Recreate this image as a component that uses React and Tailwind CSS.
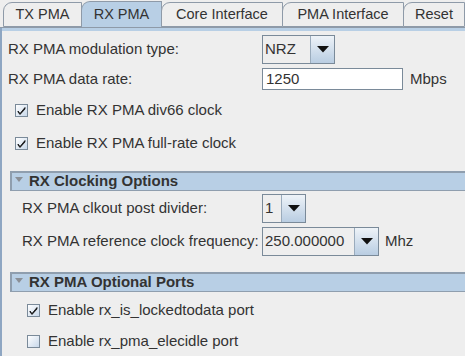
import React from "react";

const font = { fontFamily: '"Liberation Sans", Arial, sans-serif' };

const Tab = ({ label, active, className }) => (
  <div
    className={`h-[25px] flex items-center justify-center border-t border-l border-r rounded-tl-[9px] border-[#8e9aa8] text-[14.5px] text-[#333333] ${
      active ? "bg-[#b8cfe5] h-[26px] border-b-0" : "bg-[#eeeeee] border-b"
    } ${className}`}
  >
    {label}
  </div>
);

const Arrow = () => (
  <svg width="12" height="7" viewBox="0 0 12 7">
    <path d="M0 0 L12 0 L6 6.5 Z" fill="#111111" />
  </svg>
);

const Combo = ({ value, fieldW, className = "" }) => (
  <div className={`flex h-[29px] border border-[#7a8a99] ${className}`}>
    <div
      className="flex items-center pl-[2px] text-[15px] text-[#333333] bg-[#eeeeee] border-r border-[#9aabbc]"
      style={{ width: fieldW }}
    >
      {value}
    </div>
    <div className="w-[23px] flex items-center justify-center bg-gradient-to-b from-[#eef3f8] to-[#b9cde2]">
      <Arrow />
    </div>
  </div>
);

const Check = ({ checked }) => (
  <div className="w-[13px] h-[13px] border border-[#7a8a99] bg-gradient-to-br from-[#ffffff] to-[#c8d8ea] flex items-center justify-center">
    {checked && (
      <svg width="9" height="9" viewBox="0 0 9 9">
        <path d="M1 5 L3 7.5 L8 1.5 L8 3 L3 8.5 L1 6 Z" fill="#111111" stroke="#111111" strokeWidth="0.8" />
      </svg>
    )}
  </div>
);

const CheckRow = ({ label, checked, indent, className }) => (
  <div className={`h-[20px] flex items-center gap-[8px] ${indent} ${className}`}>
    <Check checked={checked} />
    <span className="text-[15px] text-[#333333]">{label}</span>
  </div>
);

const Section = ({ title, className }) => (
  <div
    className={`ml-[8px] h-[20px] flex items-center bg-[#b8cfe5] border-t-2 border-l-2 border-b border-[#8f9eae] ${className}`}
  >
    <svg width="8" height="5" viewBox="0 0 8 5" className="ml-[3px] self-start mt-[4px]">
      <path d="M0 0 L8 0 L4 5 Z" fill="#8a8f96" />
    </svg>
    <span className="ml-[6px] text-[15px] font-bold text-[#333333]">{title}</span>
  </div>
);

export default function App() {
  return (
    <div style={font} className="w-[465px] h-[356px] bg-[#eeeeee] overflow-hidden flex flex-col">
      <div className="h-[28px] flex items-end pl-[3px] border-b border-[#8e9aa8]">
        <Tab label="TX PMA" className="w-[79px]" />
        <Tab label="RX PMA" active className="w-[81px] -ml-[1px]" />
        <Tab label="Core Interface" className="w-[122px] -ml-[1px]" />
        <Tab label="PMA Interface" className="w-[122px] -ml-[1px]" />
        <Tab label="Reset" className="w-[62px] -ml-[1px]" />
      </div>
      <div className="flex-1 flex flex-col border-l-2 border-[#8ea6c2]">
        <div className="h-[3px] bg-[#b8cfe5]" />

        <div className="mt-[4px] flex items-center h-[29px]">
          <span className="w-[260px] pl-[6px] text-[15px] text-[#333333]">RX PMA modulation type:</span>
          <Combo value="NRZ" fieldW={48} />
        </div>

        <div className="mt-[4px] flex items-center h-[22px]">
          <span className="w-[260px] pl-[6px] text-[15px] text-[#333333]">RX PMA data rate:</span>
          <div className="w-[141px] h-[22px] border border-[#7a8a99] bg-white flex items-center pl-[3px] text-[15px] text-[#333333]">
            1250
          </div>
          <span className="ml-[7px] text-[15px] text-[#333333]">Mbps</span>
        </div>

        <CheckRow label="Enable RX PMA div66 clock" checked indent="pl-[13px]" className="mt-[10px]" />
        <CheckRow label="Enable RX PMA full-rate clock" checked indent="pl-[13px]" className="mt-[13px]" />

        <Section title="RX Clocking Options" className="mt-[18px]" />

        <div className="mt-[3px] flex items-center h-[29px]">
          <span className="w-[260px] pl-[20px] text-[15px] text-[#333333]">RX PMA clkout post divider:</span>
          <Combo value="1" fieldW={19} />
        </div>

        <div className="mt-[4px] flex items-center h-[29px]">
          <span className="w-[260px] pl-[20px] text-[15px] text-[#333333] whitespace-nowrap">
            RX PMA reference clock frequency:
          </span>
          <Combo value="250.000000" fieldW={92} />
          <span className="ml-[6px] text-[15px] text-[#333333]">Mhz</span>
        </div>

        <Section title="RX PMA Optional Ports" className="mt-[16px]" />

        <CheckRow label="Enable rx_is_lockedtodata port" checked indent="pl-[25px]" className="mt-[8px]" />
        <CheckRow label="Enable rx_pma_elecidle port" indent="pl-[25px]" className="mt-[11px]" />
      </div>
    </div>
  );
}
